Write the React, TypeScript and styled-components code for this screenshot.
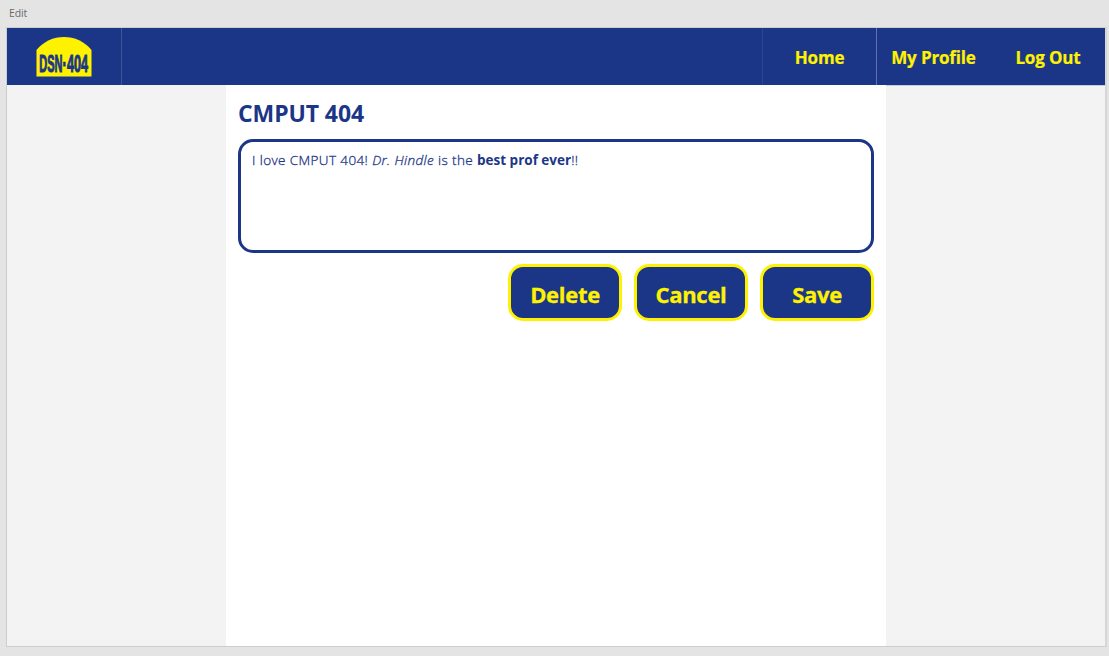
import React from "react";
import styled, { createGlobalStyle } from "styled-components";

const navy = "#1c3687";
const yellow = "#fff200";

const GlobalStyle = createGlobalStyle`
  * { box-sizing: border-box; }
  body {
    margin: 0;
    background: #e4e4e4;
    font-family: "Open Sans", "Noto Sans", sans-serif;
  }
`;

const Canvas = styled.div`
  height: 656px;
  padding: 0 2px 9px 6px;
  display: flex;
  flex-direction: column;
  overflow: hidden;
`;

const FrameLabel = styled.div`
  height: 27px;
  padding: 0 0 0 3px;
  line-height: 27px;
  font-size: 10.5px;
  color: #6a6a6a;
  letter-spacing: -0.1px;
`;

const Frame = styled.div`
  flex: 1;
  display: flex;
  flex-direction: column;
  background: #f3f3f3;
  border: 1px solid #cdcdcd;
  border-right: 2px solid #d6d6d6;
`;

const NavBar = styled.header`
  display: flex;
  height: 57px;
  background: ${navy};
`;

const LogoCell = styled.div`
  width: 115px;
  padding: 8px 0 0 29px;
  border-right: 1px solid #3f559a;
`;

const Spacer = styled.div`
  flex: 1;
`;

const NavItem = styled.a<{ $rule?: string; $underline?: boolean }>`
  width: 114px;
  height: 57px;
  line-height: 59px;
  text-align: center;
  white-space: nowrap;
  color: ${yellow};
  font-size: 17px;
  font-weight: 700;
  letter-spacing: -0.15px;
  -webkit-text-stroke: 0.2px ${yellow};
  border-left: 1px solid ${(p) => p.$rule ?? "transparent"};
  box-shadow: ${(p) => (p.$underline ? "0 1px 0 #c6cbe0" : "none")};

  &:last-child { width: 115px; }
`;

const Column = styled.main`
  flex: 1;
  width: 660px;
  margin-left: 219px;
  padding: 11px 12px 0;
  background: #fff;
`;

const Title = styled.h1`
  margin: 0;
  height: 42.5px;
  line-height: 34px;
  font-size: 23px;
  font-weight: 700;
  color: ${navy};
  letter-spacing: -0.1px;
`;

const Editor = styled.div`
  width: 636px;
  height: 114px;
  padding: 8.5px 11px;
  border: 3px solid ${navy};
  border-radius: 15px;
  color: ${navy};
  font-size: 13.5px;
  font-weight: 300;
  line-height: 20px;
  letter-spacing: 0.39px;
  -webkit-text-stroke: 0.3px ${navy};

  b {
    font-weight: 700;
    letter-spacing: 0;
    -webkit-text-stroke: 0;
  }
`;

const Actions = styled.div`
  display: flex;
  justify-content: flex-end;
  gap: 12px;
  margin-top: 11.5px;
`;

const ActionButton = styled.button`
  width: 114px;
  height: 57px;
  padding: 3px 0 0;
  border: 3px solid ${yellow};
  border-radius: 15px;
  background: ${navy};
  color: ${yellow};
  font: 700 22px "Open Sans", "Noto Sans", sans-serif;
  letter-spacing: -0.3px;
  -webkit-text-stroke: 0.3px ${yellow};
`;

const LogoArt = styled.svg`
  display: block;
  overflow: visible;

  text {
    font: 700 23px "Liberation Sans", sans-serif;
    fill: ${navy};
    stroke: ${navy};
    stroke-width: 1.1px;
  }
`;

const Logo = () => (
  <LogoArt width="56" height="41" viewBox="0 0 56 41">
    <path d="M.5 40.5V14C14-3.5 42-3.5 55.5 14V40.5Z" fill={yellow} />
    <text x="3.3" y="35.5" textLength="23.2" lengthAdjust="spacingAndGlyphs">DSN</text>
    <text x="26.6" y="35.5" textLength="4.2" lengthAdjust="spacingAndGlyphs">·</text>
    <text x="31" y="35.5" textLength="21" lengthAdjust="spacingAndGlyphs">404</text>
  </LogoArt>
);

export default function App() {
  return (
    <Canvas>
      <GlobalStyle />
      <FrameLabel>Edit</FrameLabel>
      <Frame>
        <NavBar>
          <LogoCell>
            <Logo />
          </LogoCell>
          <Spacer />
          <NavItem $rule="#2d4590">Home</NavItem>
          <NavItem $rule="#6072ab" $underline>My Profile</NavItem>
          <NavItem $underline>Log Out</NavItem>
        </NavBar>
        <Column>
          <Title>CMPUT 404</Title>
          <Editor>
            I love CMPUT 404! <i>Dr. Hindle</i> is the <b>best prof ever</b>!!
          </Editor>
          <Actions>
            <ActionButton>Delete</ActionButton>
            <ActionButton>Cancel</ActionButton>
            <ActionButton>Save</ActionButton>
          </Actions>
        </Column>
      </Frame>
    </Canvas>
  );
}
